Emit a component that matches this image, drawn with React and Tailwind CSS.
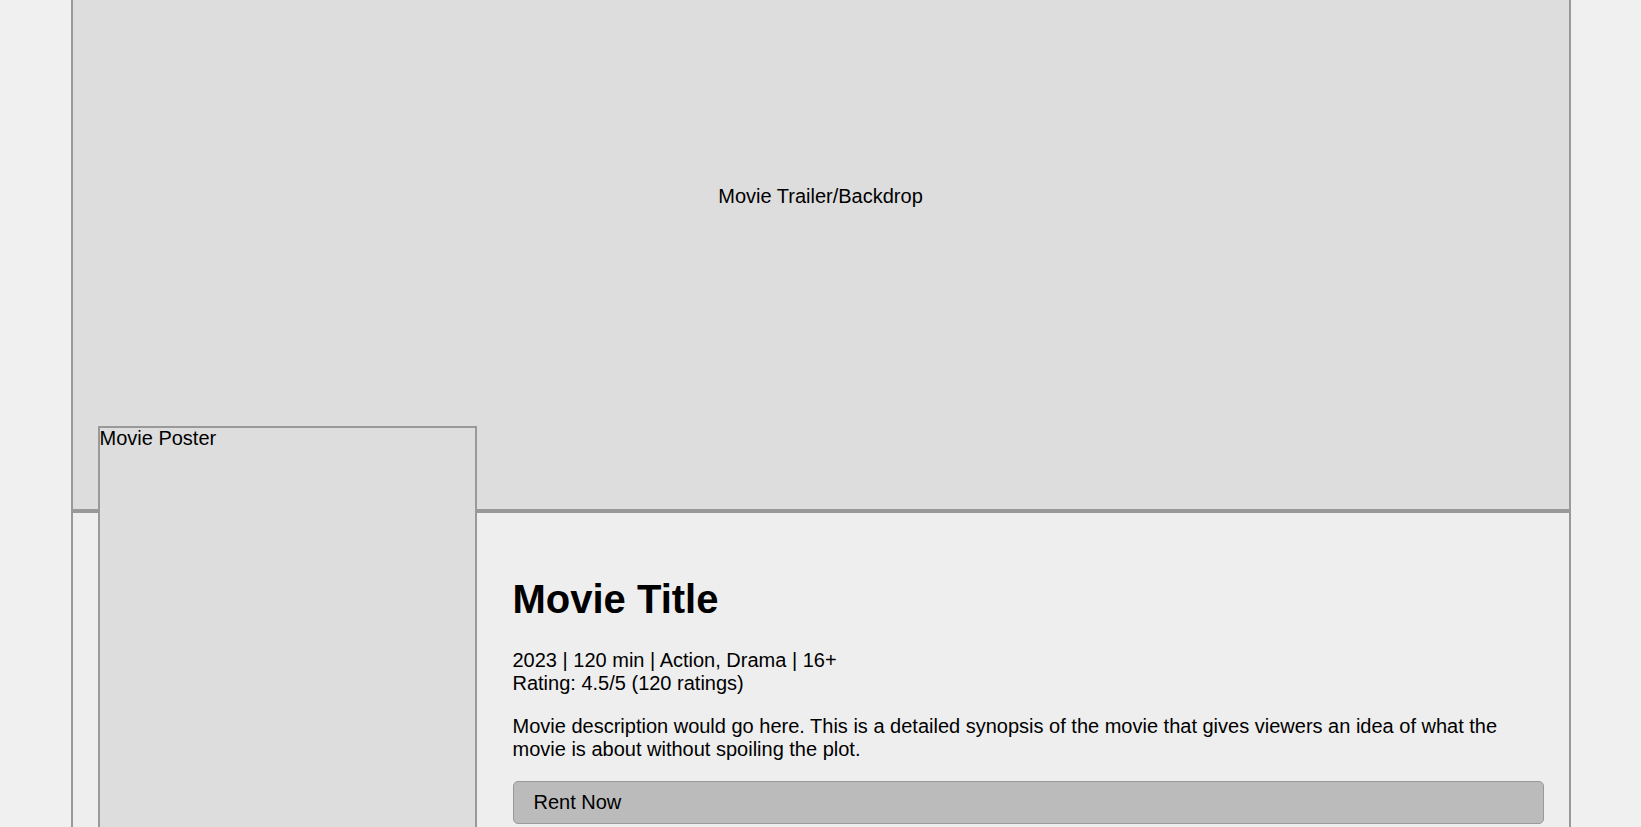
export default function App() {
  return (
    <div className="min-h-screen bg-[#f0f0f0] font-['Liberation_Sans',Arial,sans-serif] text-[20px] text-black">
      <div className="mx-auto w-[1500px] border-x-2 border-[#999999] bg-[#eeeeee]">
        {/* Backdrop */}
        <div className="h-[513px] border-b-4 border-[#999999] bg-[#dddddd] pt-[181px] text-center">
          Movie Trailer/Backdrop
        </div>

        {/* Info */}
        <div className="flex px-[25px] pt-[25px]">
          <div className="mt-[-112.5px] h-[563px] w-[379px] shrink-0 border-2 border-[#999999] bg-[#dddddd] leading-[20px]">
            Movie Poster
          </div>
          <div className="flex-1 pl-[36px] pt-[11px]">
            <h1 className="my-[27px] text-[40px] font-bold leading-[46px]">Movie Title</h1>
            <p className="mb-[20px] leading-[23px]">
              2023 | 120 min | Action, Drama | 16+
              <br />
              Rating: 4.5/5 (120 ratings)
            </p>
            <p className="mb-[20px] leading-[23px]">
              Movie description would go here. This is a detailed synopsis of the movie that gives
              viewers an idea of what the movie is about without spoiling the plot.
            </p>
            <button className="block w-full rounded-[5px] border border-[#999999] bg-[#bbbbbb] px-[20px] py-[9px] text-left leading-[23px]">
              Rent Now
            </button>
          </div>
        </div>
      </div>
    </div>
  );
}
